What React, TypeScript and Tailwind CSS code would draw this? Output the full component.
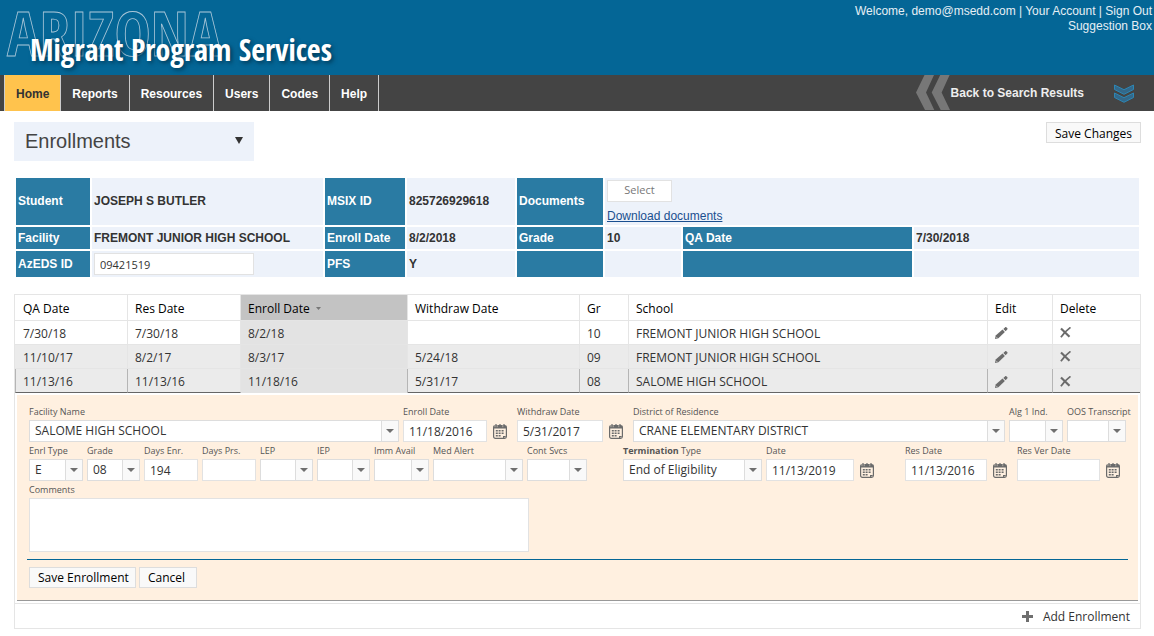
import React from "react";

const UI = "font-['Open_Sans','Noto_Sans',sans-serif]";

const navItems = ["Home", "Reports", "Resources", "Users", "Codes", "Help"];

type Row = {
  qa: string;
  res: string;
  enroll: string;
  withdraw: string;
  grade: string;
  school: string;
};

const rows: Row[] = [
  { qa: "7/30/18", res: "7/30/18", enroll: "8/2/18", withdraw: "", grade: "10", school: "FREMONT JUNIOR HIGH SCHOOL" },
  { qa: "11/10/17", res: "8/2/17", enroll: "8/3/17", withdraw: "5/24/18", grade: "09", school: "FREMONT JUNIOR HIGH SCHOOL" },
  { qa: "11/13/16", res: "11/13/16", enroll: "11/18/16", withdraw: "5/31/17", grade: "08", school: "SALOME HIGH SCHOOL" },
];

function CaretIcon() {
  return (
    <svg width="8" height="4" viewBox="0 0 8 4" aria-hidden="true">
      <path d="M0 0h8L4 4z" fill="#6f6f6f" />
    </svg>
  );
}

function PencilIcon() {
  return (
    <svg width="13" height="12" viewBox="0 0 13 12" aria-hidden="true">
      <path d="M0 12l.7-3.400 6.800-6 2.400 2.500-6.500 6.100z" fill="#6b6b6b" />
      <path d="M8.300 1.900L10 .4c.5-.5 1-.5 1.500 0l.7.7c.5.5.5 1 0 1.500l-1.500 1.600z" fill="#6b6b6b" />
      <path d="M1.200 9.900l1 1" stroke="#d8d8d8" strokeWidth=".8" />
    </svg>
  );
}

function CrossIcon() {
  return (
    <svg width="11" height="11" viewBox="0 0 11 11" aria-hidden="true">
      <path d="M1 1.500L9.500 9.800" stroke="#6b6b6b" strokeWidth="2.200" />
      <path d="M10.500.4C7 3 3.500 6.500.9 10.200" stroke="#6b6b6b" strokeWidth="1.700" fill="none" />
    </svg>
  );
}

function CalendarIcon() {
  return (
    <svg width="14" height="15" viewBox="0 0 14 15" aria-hidden="true">
      <rect x=".6" y="1.600" width="12.800" height="12.800" rx="1.800" fill="none" stroke="#6b6b6b" strokeWidth="1.200" />
      <path d="M.6 2h12.800v2.500H.6z" fill="#6b6b6b" />
      <path d="M3 0v3M7 0v3M11 0v3" stroke="#6b6b6b" strokeWidth="1.200" />
      <path d="M2 1.200v2M4.200 1.200v2M9.800 1.200v2" stroke="#fff0e0" strokeWidth=".5" />
      <path d="M5.600 6h2v1.600h-2zM8.600 6h2v1.600h-2zM2.800 8.500h2v1.600h-2zM5.600 8.500h2v1.600h-2zM8.600 8.500h2v1.600h-2zM2.800 11h2v1.600h-2zM5.600 11h2v1.600h-2zM2.800 6h2v1.600h-2z" fill="#6b6b6b" />
      <path d="M10 14.400v-2.500h3.400z" fill="#6b6b6b" />
    </svg>
  );
}

type FieldProps = {
  id: string;
  label: React.ReactNode;
  value?: string;
  className: string;
};

function Label({ id, children }: { id: string; children: React.ReactNode }) {
  return (
    <label htmlFor={id} className="block whitespace-nowrap text-[9px] leading-[17px] text-[#555]">
      {children}
    </label>
  );
}

function SelectField({ id, label, value = "", className }: FieldProps) {
  return (
    <div className={className}>
      <Label id={id}>{label}</Label>
      <div className="relative">
        <select
          id={id}
          defaultValue={value}
          className="block h-[22px] w-full appearance-none border border-[#ddd] bg-white pl-[5px] pr-[18px] text-xs leading-5 text-[#333]"
        >
          <option value={value}>{value}</option>
        </select>
        <span className="pointer-events-none absolute inset-y-px right-px flex w-[17px] items-center justify-center border-l border-[#ddd] bg-[#f9f9f9]">
          <CaretIcon />
        </span>
      </div>
    </div>
  );
}

function TextField({ id, label, value = "", className }: FieldProps) {
  return (
    <div className={className}>
      <Label id={id}>{label}</Label>
      <input
        id={id}
        type="text"
        defaultValue={value}
        className="block h-[22px] w-full border border-[#e2e2e2] bg-white px-[5px] text-xs leading-5 text-[#333]"
      />
    </div>
  );
}

function DateField(props: FieldProps) {
  return (
    <div className="flex items-end">
      <TextField {...props} />
      <button type="button" aria-label="Open calendar" className="flex h-[22px] w-[26px] items-center justify-center">
        <CalendarIcon />
      </button>
    </div>
  );
}

const th = "bg-[#2a7ba3] px-[2px] text-left font-bold text-white";
const td = "bg-[#edf2fa] px-[2px] font-bold text-[#333]";

function StudentInfo() {
  return (
    <table className="mt-[15px] w-full table-fixed border-separate border-spacing-[2px] text-xs">
      <colgroup>
        <col className="w-[74px]" />
        <col className="w-[231px]" />
        <col className="w-[80px]" />
        <col className="w-[108px]" />
        <col className="w-[86px]" />
        <col className="w-[76px]" />
        <col className="w-[229px]" />
        <col />
      </colgroup>
      <tbody>
        <tr className="h-[47px]">
          <th scope="row" className={`${th} pb-[2px]`}>Student</th>
          <td className={`${td} pb-[2px]`}>JOSEPH S BUTLER</td>
          <th scope="row" className={`${th} pb-[2px]`}>MSIX ID</th>
          <td className={`${td} pb-[2px]`}>825726929618</td>
          <th scope="row" className={`${th} pb-[2px]`}>Documents</th>
          <td colSpan={3} className="bg-[#edf2fa] px-[2px] align-top">
            <button type="button" className={`mt-[2px] block h-[22px] w-[65px] border border-[#e2e2e2] bg-white pb-[2px] text-[11px] leading-4 text-[#777] ${UI}`}>
              Select
            </button>
            <a href="#documents" className="mt-[6px] block w-fit leading-4 text-[#1a4f8f] underline">
              Download documents
            </a>
          </td>
        </tr>
        <tr className="h-[22px]">
          <th scope="row" className={th}>Facility</th>
          <td className={td}>FREMONT JUNIOR HIGH SCHOOL</td>
          <th scope="row" className={th}>Enroll Date</th>
          <td className={td}>8/2/2018</td>
          <th scope="row" className={th}>Grade</th>
          <td className={td}>10</td>
          <th scope="row" className={th}>QA Date</th>
          <td className={td}>7/30/2018</td>
        </tr>
        <tr className="h-[26px]">
          <th scope="row" className={th}>
            <label htmlFor="azeds">AzEDS ID</label>
          </th>
          <td className={td}>
            <input
              id="azeds"
              type="text"
              defaultValue="09421519"
              className={`block h-[22px] w-[160px] border border-[#e2e2e2] bg-white px-[5px] text-[11px] font-normal leading-5 text-[#333] ${UI}`}
            />
          </td>
          <th scope="row" className={th}>PFS</th>
          <td className={td}>Y</td>
          <td className="bg-[#2a7ba3]" />
          <td className={td} />
          <td className="bg-[#2a7ba3]" />
          <td className={td} />
        </tr>
      </tbody>
    </table>
  );
}

function EnrollmentForm() {
  const button = "h-[21px] border border-[#ddd] bg-[#f9f9f9] px-2 text-left text-xs leading-4 whitespace-nowrap text-black";
  return (
    <form className="border-b border-[#999] bg-[#fff0e0] px-3 pb-3 pt-2" onSubmit={(e) => e.preventDefault()}>
      <div className="flex gap-1">
        <SelectField id="facility" label="Facility Name" value="SALOME HIGH SCHOOL" className="min-w-0 flex-[370_1_0px]" />
        <DateField id="enroll" label="Enroll Date" value="11/18/2016" className="w-[84px]" />
        <DateField id="withdraw" label="Withdraw Date" value="5/31/2017" className="w-[86px]" />
        <SelectField id="district" label="District of Residence" value="CRANE ELEMENTARY DISTRICT" className="min-w-0 flex-[372_1_0px]" />
        <SelectField id="alg" label="Alg 1 Ind." className="w-[54px]" />
        <SelectField id="oos" label="OOS Transcript" className="w-[59px]" />
      </div>
      <div className="flex">
        <div className="flex gap-1">
          <SelectField id="type" label="Enrl Type" value="E" className="w-[54px]" />
          <SelectField id="grade" label="Grade" value="08" className="w-[53px]" />
          <TextField id="enrDays" label="Days Enr." value="194" className="w-[54px]" />
          <TextField id="prsDays" label="Days Prs." className="w-[54px]" />
          <SelectField id="lep" label="LEP" className="w-[53px]" />
          <SelectField id="iep" label="IEP" className="w-[53px]" />
          <SelectField id="imm" label="Imm Avail" className="w-[55px]" />
          <SelectField id="med" label="Med Alert" className="w-[90px]" />
          <SelectField id="cont" label="Cont Svcs" className="w-[60px]" />
        </div>
        <div className="ml-9 flex gap-1">
          <SelectField
            id="term"
            label={<><b>Termination</b> Type</>}
            value="End of Eligibility"
            className="w-[139px]"
          />
          <DateField id="termDate" label="Date" value="11/13/2019" className="w-[88px]" />
        </div>
        <div className="ml-auto flex gap-1">
          <DateField id="resDate" label="Res Date" value="11/13/2016" className="w-[82px]" />
          <DateField id="resVer" label="Res Ver Date" className="w-[83px]" />
        </div>
      </div>
      <Label id="comments">Comments</Label>
      <textarea id="comments" className="block h-[54px] w-[500px] resize-none border border-[#e2e2e2] bg-white p-1 text-xs" />
      <hr className="-mx-[2px] mt-[7px] border-t border-[#046696]" />
      <div className="mt-[7px] flex gap-[3px]">
        <button type="submit" className={`${button} w-[107px]`}>Save Enrollment</button>
        <button type="button" className={`${button} w-[58px]`}>Cancel</button>
      </div>
    </form>
  );
}

function EnrollmentGrid() {
  const headBase = "border-b border-[#e5e5e5] pt-[2px] text-left font-normal text-black";
  const head = `${headBase} border-r pl-[7px]`;
  return (
    <div className={`mt-[15px] border border-[#e5e5e5] text-xs ${UI}`}>
      <table className="w-full table-fixed border-separate border-spacing-0">
        <colgroup>
          <col className="w-[113px]" />
          <col className="w-[113px]" />
          <col className="w-[167px]" />
          <col className="w-[172px]" />
          <col className="w-[49px]" />
          <col />
          <col className="w-[65px]" />
          <col className="w-[87px]" />
        </colgroup>
        <thead>
          <tr className="h-[26px]">
            <th className={`${headBase} border-r pl-2`}>QA Date</th>
            <th className={head}>Res Date</th>
            <th className={`${head} bg-[#c3c3c3]`}>
              <span className="flex items-center gap-[6px]">
                Enroll Date
                <svg width="5" height="3" viewBox="0 0 5 3" aria-hidden="true">
                  <path d="M0 0h5L2.500 3z" fill="#777" />
                </svg>
              </span>
            </th>
            <th className={head}>Withdraw Date</th>
            <th className={head}>Gr</th>
            <th className={head}>School</th>
            <th className={head}>Edit</th>
            <th className={`${headBase} pl-[7px]`}>Delete</th>
          </tr>
        </thead>
        <tbody className="text-[#333]">
          {rows.map((r, i) => {
            const selected = i === 2;
            const line = selected ? "border-r-[#b5b5b5] border-b-[#666]" : "border-[#e5e5e5]";
            const base = `border-b border-r pt-[2px] ${line}`;
            const cell = `${base} pl-[7px]`;
            const iconPad = selected ? "pt-[2px]" : "";
            return (
              <tr key={r.qa} className={i === 0 ? "h-6 bg-white" : "h-6 bg-[#ebebeb]"}>
                <td className={selected ? `${cell} border-l border-l-[#b5b5b5]` : `${base} pl-2`}>{r.qa}</td>
                <td className={selected ? "border-b border-r border-r-[#e5e5e5] border-b-[#666] pl-[7px] pt-[2px]" : cell}>{r.res}</td>
                <td className={selected ? "border-r border-[#b5b5b5] bg-[#e3e3e3] pl-[7px] pt-[2px]" : `${cell} bg-[#e3e3e3]`}>{r.enroll}</td>
                <td className={cell}>{r.withdraw}</td>
                <td className={cell}>{r.grade}</td>
                <td className={cell}>{r.school}</td>
                <td className={`border-b border-r pl-[7px] ${line} ${iconPad}`}>
                  <button type="button" aria-label="Edit" className="block">
                    <PencilIcon />
                  </button>
                </td>
                <td className={`border-b pl-[7px] ${iconPad} ${selected ? "border-[#666]" : "border-[#e5e5e5]"}`}>
                  <button type="button" aria-label="Delete" className="block">
                    <CrossIcon />
                  </button>
                </td>
              </tr>
            );
          })}
          <tr>
            <td colSpan={8} className="p-[2px]">
              <EnrollmentForm />
            </td>
          </tr>
        </tbody>
      </table>
      <div className="flex h-[25px] justify-end border-t border-[#e5e5e5] pr-[10px] pt-px text-[#333]">
        <button type="button" className="flex items-center gap-[10px]">
          <svg width="11" height="11" viewBox="0 0 11 11" aria-hidden="true">
            <path d="M4 0h3v4h4v3H7v4H4V7H0V4h4z" fill="#6f6f6f" />
          </svg>
          Add Enrollment
        </button>
      </div>
    </div>
  );
}

export default function App() {
  return (
    <div className="min-h-screen bg-white font-['Liberation_Sans',Arial,sans-serif] text-xs text-[#333]">
      <header className="relative flex h-[75px] justify-between bg-[#046696]">
        <div className="font-['Open_Sans_Condensed','Roboto_Condensed','Liberation_Sans_Narrow',sans-serif]">
          <svg width="340" height="75" viewBox="0 0 340 75" className="block overflow-visible">
            <text x="7" y="56" fontSize="61" fill="none" stroke="#a9c6d8" strokeWidth="0.8">ARIZONA</text>
          </svg>
          <h1 className="absolute left-[30px] top-8 text-[30px] font-bold leading-9 text-white [text-shadow:2px_2px_4px_#013a58]">
            Migrant Program Services
          </h1>
        </div>
        <div className="pr-[2px] pt-1 text-right leading-[15px] text-[#e6eff5]">
          <p>
            Welcome, demo@msedd.com | <a href="#account">Your Account</a> | <a href="#signout">Sign Out</a>
          </p>
          <a href="#suggestions">Suggestion Box</a>
        </div>
      </header>

      <nav className="flex h-9 justify-between bg-[#444] pl-1 font-bold text-white">
        <ul className="flex border-l border-[#ccc]">
          {navItems.map((item, i) => (
            <li key={item} className="border-r border-[#ccc]">
              <a
                href={`#${item.toLowerCase()}`}
                className={`flex h-full items-center px-[11px] pt-px ${i === 0 ? "bg-[#ffc34d] text-[#333]" : ""}`}
              >
                {item}
              </a>
            </li>
          ))}
        </ul>
        <div className="flex items-center gap-[30px] pr-5">
          <a href="#results" className="flex h-full items-center text-[#eee]">
            <svg width="34" height="36" viewBox="0 0 34 36" aria-hidden="true">
              <path d="M0 17.500L8.500 0H18L10 17.500 18.300 35H9z" fill="#777" />
              <path d="M15.700 17.500L24.200 0h9.400l-8 17.500L34 35h-9.300z" fill="#777" />
            </svg>
            <span className="ml-px">Back to Search Results</span>
          </a>
          <button type="button" aria-label="Expand">
            <svg width="20" height="19" viewBox="0 0 20 19" aria-hidden="true">
              <path d="M.5 1L10 5.700 19.500 1v4.500L10 10.300.5 5.500z" fill="#33688a" stroke="#2c86b4" />
              <path d="M.5 9L10 13.700 19.500 9v4.500L10 18.300.5 13.500z" fill="#33688a" stroke="#2c86b4" />
            </svg>
          </button>
        </div>
      </nav>

      <main className="pb-2 pl-[14px] pr-[13px] pt-[11px]">
        <div className="flex items-start justify-between">
          <div className="relative w-[240px]">
            <select
              aria-label="Section"
              className="block h-[39px] w-full appearance-none bg-[#edf2fa] pb-[2px] pl-[11px] text-xl text-[#444]"
            >
              <option>Enrollments</option>
            </select>
            <svg width="8" height="7" viewBox="0 0 8 7" aria-hidden="true" className="pointer-events-none absolute right-[11px] top-[15px]">
              <path d="M0 0h8L4 7z" fill="#333" />
            </svg>
          </div>
          <button type="button" className={`h-[21px] border border-[#ddd] bg-[#f9f9f9] px-2 pt-[2px] text-xs leading-4 text-black ${UI}`}>
            Save Changes
          </button>
        </div>
        <StudentInfo />
        <EnrollmentGrid />
      </main>
    </div>
  );
}
